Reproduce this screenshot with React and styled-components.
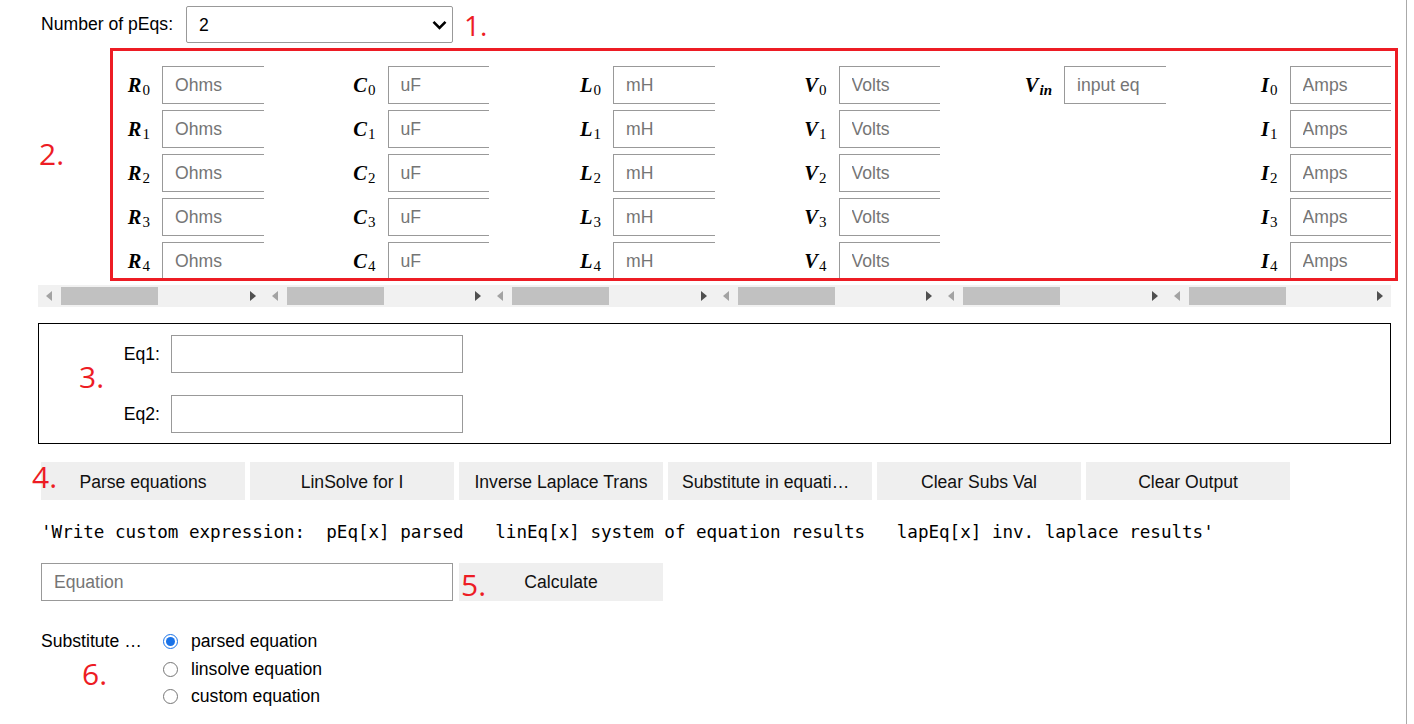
import React from 'react';
import styled, { createGlobalStyle } from 'styled-components';

const GlobalStyle = createGlobalStyle`
  html, body {
    margin: 0;
    padding: 0;
    background: #fff;
  }
  body {
    font-family: "Liberation Sans", Arial, sans-serif;
    font-size: 17.6px;
    color: #000;
  }
  * {
    box-sizing: border-box;
  }
`;

const Page = styled.div`
  position: relative;
  width: 1407px;
  min-height: 724px;
  border-right: 1px solid #aaa;
  overflow: hidden;
`;

const TopBar = styled.div`
  display: flex;
  align-items: center;
  gap: 13px;
  padding: 6px 0 0 41px;
`;

const SelectWrap = styled.div`
  position: relative;
  width: 267px;
  height: 37px;
`;

const Select = styled.select`
  appearance: none;
  width: 100%;
  height: 100%;
  border: 1px solid #999;
  border-radius: 2px;
  background: #fff;
  padding: 0 0 0 12px;
  font-family: "Liberation Sans", Arial, sans-serif;
  font-size: 17.6px;
  color: #000;
`;

const Chevron = styled.svg`
  position: absolute;
  right: 6px;
  top: 14px;
  pointer-events: none;
`;

const Columns = styled.div`
  display: grid;
  grid-template-columns: repeat(6, 225.5px);
  margin-top: 20px;
  padding-left: 38px;
`;

const Column = styled.div`
  display: flex;
  flex-direction: column;
`;

const ColumnView = styled.div`
  overflow: hidden;
  height: 221px;
`;

const FieldRow = styled.div`
  display: flex;
  align-items: center;
  height: 44px;
  padding: 3px 0;
`;

const MathLabel = styled.label`
  flex-shrink: 0;
  width: 112px;
  margin-right: 12px;
  text-align: right;
  font-family: "Liberation Serif", "Times New Roman", serif;
  font-size: 20.5px;
  font-weight: bold;
  font-style: italic;
  white-space: nowrap;
`;

const Sub = styled.sub`
  font-size: 15px;
  font-weight: ${p => (p.$italic ? 'bold' : 'normal')};
  font-style: ${p => (p.$italic ? 'italic' : 'normal')};
  vertical-align: -3px;
  line-height: 0;
  margin-left: 1px;
`;

const TextInput = styled.input`
  flex-shrink: 0;
  width: ${p => p.$width || '300px'};
  height: 38px;
  border: 1px solid #999;
  border-radius: 0;
  padding: 0 12px;
  font-family: "Liberation Sans", Arial, sans-serif;
  font-size: 17.6px;
  color: #000;
  background: #fff;
  outline: none;
  &::placeholder {
    color: #757575;
  }
`;

const Scrollbar = styled.div`
  display: flex;
  align-items: center;
  height: 22px;
  margin-top: 1px;
  background: #f1f1f1;
`;

const ArrowLeft = styled.span`
  width: 0;
  height: 0;
  margin-left: 8px;
  border-top: 5.5px solid transparent;
  border-bottom: 5.5px solid transparent;
  border-right: 6px solid #a3a3a3;
`;

const ArrowRight = styled.span`
  width: 0;
  height: 0;
  margin-left: auto;
  margin-right: 8px;
  border-top: 5.5px solid transparent;
  border-bottom: 5.5px solid transparent;
  border-left: 6px solid #505050;
`;

const Thumb = styled.span`
  width: 97px;
  height: 18px;
  margin-left: 9px;
  background: #c1c1c1;
`;

const EqBox = styled.div`
  display: flex;
  flex-direction: column;
  gap: 22px;
  width: 1353px;
  margin: 16px 0 0 38px;
  padding: 11px 0 10px;
  border: 1px solid #000;
`;

const EqRow = styled.div`
  display: flex;
  align-items: center;
  gap: 11px;
`;

const EqLabel = styled.label`
  width: 121px;
  text-align: right;
`;

const ButtonRow = styled.div`
  display: flex;
  gap: 5px;
  margin: 18px 0 0 41px;
`;

const Button = styled.button`
  width: 204px;
  height: 38px;
  padding: ${p => (p.$low ? '2px' : '0')} 14px 0;
  border: none;
  border-radius: 0;
  background: #efefef;
  font-family: "Liberation Sans", Arial, sans-serif;
  font-size: 17.6px;
  color: #111;
  white-space: nowrap;
  overflow: hidden;
  text-overflow: ellipsis;
`;

const Hint = styled.div`
  margin: 21px 0 0 41px;
  height: 22px;
  line-height: 22px;
  font-family: "DejaVu Sans Mono", "Liberation Mono", monospace;
  font-size: 17.6px;
  letter-spacing: -0.027px;
  white-space: pre;
  color: #000;
`;

const CalcRow = styled.div`
  display: flex;
  gap: 6px;
  margin: 20px 0 0 41px;
`;

const SubstSection = styled.div`
  display: flex;
  margin: 27px 0 0 41px;
`;

const SubstLabel = styled.div`
  width: 122px;
  height: 27.5px;
  line-height: 27.5px;
`;

const Options = styled.div`
  display: flex;
  flex-direction: column;
`;

const Option = styled.label`
  display: flex;
  align-items: center;
  gap: 13px;
  height: 27.5px;
`;

const Radio = styled.input`
  width: 15px;
  height: 15px;
  margin: 0;
  accent-color: #1a73e8;
`;

const Marker = styled.div`
  position: absolute;
  left: ${p => p.$x}px;
  top: ${p => p.$y}px;
  font-family: "Open Sans", "Noto Sans", sans-serif;
  font-size: ${p => p.$size || 30}px;
  line-height: 1;
  color: #ed1c24;
  pointer-events: none;
`;

const Frame = styled.div`
  position: absolute;
  left: 110px;
  top: 48px;
  width: 1288px;
  height: 233px;
  border: 3px solid #ed1c24;
  pointer-events: none;
`;

const columns = [
  { sym: 'R', unit: 'Ohms' },
  { sym: 'C', unit: 'uF' },
  { sym: 'L', unit: 'mH' },
  { sym: 'V', unit: 'Volts' },
  { sym: 'V', unit: 'input eq', only: 'in' },
  { sym: 'I', unit: 'Amps' },
];

const buttons = [
  'Parse equations',
  'LinSolve for I',
  'Inverse Laplace Trans',
  'Substitute in equations',
  'Clear Subs Val',
  'Clear Output',
];

const hint = "'Write custom expression:  pEq[x] parsed   linEq[x] system of equation results   lapEq[x] inv. laplace results'";

function ValueColumn({ sym, unit, only }) {
  const rows = [0, 1, 2, 3, 4];
  return (
    <Column>
      <ColumnView>
        {rows.map(i => (
          <FieldRow key={i}>
            {(!only || i === 0) && (
              <>
                <MathLabel>
                  {sym}
                  <Sub $italic={!!only}>{only || i}</Sub>
                </MathLabel>
                <TextInput placeholder={unit} />
              </>
            )}
          </FieldRow>
        ))}
      </ColumnView>
      <Scrollbar>
        <ArrowLeft />
        <Thumb />
        <ArrowRight />
      </Scrollbar>
    </Column>
  );
}

export default function App() {
  return (
    <Page>
      <GlobalStyle />
      <TopBar>
        <span>Number of pEqs:</span>
        <SelectWrap>
          <Select defaultValue="2">
            <option value="1">1</option>
            <option value="2">2</option>
            <option value="3">3</option>
            <option value="4">4</option>
            <option value="5">5</option>
          </Select>
          <Chevron width="15" height="10" viewBox="0 0 15 10">
            <polyline points="1.5,1.8 7.5,7.8 13.5,1.8" fill="none" stroke="#000" strokeWidth="2.6" />
          </Chevron>
        </SelectWrap>
      </TopBar>

      <Columns>
        {columns.map((c, i) => (
          <ValueColumn key={i} {...c} />
        ))}
      </Columns>

      <EqBox>
        <EqRow>
          <EqLabel>Eq1:</EqLabel>
          <TextInput $width="292px" />
        </EqRow>
        <EqRow>
          <EqLabel>Eq2:</EqLabel>
          <TextInput $width="292px" />
        </EqRow>
      </EqBox>

      <ButtonRow>
        {buttons.map(b => (
          <Button key={b} $low>{b}</Button>
        ))}
      </ButtonRow>

      <Hint>{hint}</Hint>

      <CalcRow>
        <TextInput $width="412px" placeholder="Equation" />
        <Button>Calculate</Button>
      </CalcRow>

      <SubstSection>
        <SubstLabel>Substitute …</SubstLabel>
        <Options>
          <Option>
            <Radio type="radio" name="subst" defaultChecked />
            parsed equation
          </Option>
          <Option>
            <Radio type="radio" name="subst" />
            linsolve equation
          </Option>
          <Option>
            <Radio type="radio" name="subst" />
            custom equation
          </Option>
        </Options>
      </SubstSection>

      <Frame />
      <Marker $x={464} $y={11} $size={28}>1.</Marker>
      <Marker $x={39} $y={139}>2.</Marker>
      <Marker $x={79} $y={362}>3.</Marker>
      <Marker $x={32} $y={462}>4.</Marker>
      <Marker $x={461} $y={570}>5.</Marker>
      <Marker $x={82} $y={659}>6.</Marker>
    </Page>
  );
}
